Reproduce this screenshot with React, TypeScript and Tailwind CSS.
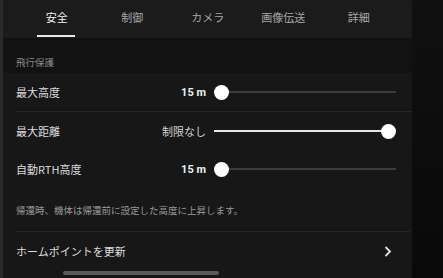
import React from "react";

const tabs = ["安全", "制御", "カメラ", "画像伝送", "詳細"];

function Slider({ value }: { value: number }) {
  // value: 0..1, knob travels inside the track
  return (
    <div className="relative w-[182px] h-[15px] flex items-center">
      <div className="absolute left-0 right-0 h-[2px] bg-[#3c3c3c]" />
      <div
        className="absolute left-0 h-[2px] bg-[#e8e8e8]"
        style={{ width: `${7 + value * 167}px` }}
      />
      <div
        className="absolute w-[15px] h-[15px] rounded-full bg-white"
        style={{ left: `${value * 167}px` }}
      />
    </div>
  );
}

function SliderRow({
  label,
  value,
  pos,
  bold,
}: {
  label: string;
  value: string;
  pos: number;
  bold?: boolean;
}) {
  return (
    <div className="flex items-center h-[38px] pl-[13px] pr-[16px]">
      <div className="flex-1 text-[11px] text-[#dcdcdc]">{label}</div>
      <div
        className={
          bold
            ? "text-[11px] font-bold text-[#eeeeee] font-['Roboto','Noto_Sans_CJK_JP',sans-serif]"
            : "text-[11px] text-[#d0d0d0]"
        }
      >
        {value}
      </div>
      <div className="ml-[8px]">
        <Slider value={pos} />
      </div>
    </div>
  );
}

export default function App() {
  return (
    <div className="w-[443px] h-[278px] flex bg-[#0c0c0c] overflow-hidden font-['Noto_Sans_CJK_JP',sans-serif] leading-none">
      <div className="w-[3px] bg-[#2a2a2a]" />
      <div className="w-[409px] flex flex-col bg-[#161616]">
        {/* tabs */}
        <div className="h-[38px] bg-[#1b1b1b] flex pl-[16px]">
          {tabs.map((t, i) => (
            <div
              key={t}
              className="w-[75.5px] relative flex items-center justify-center pb-[4px]"
            >
              <span
                className={
                  i === 0
                    ? "text-[11px] text-[#f2f2f2]"
                    : "text-[11px] text-[#a6a6a6]"
                }
              >
                {t}
              </span>
              {i === 0 && (
                <div className="absolute bottom-[1px] left-[18px] w-[38px] h-[2px] bg-[#e6e6e6]" />
              )}
            </div>
          ))}
        </div>

        {/* section header */}
        <div className="h-[35px] bg-[#121212] flex items-end pl-[13px] pb-[6px]">
          <span className="text-[9.5px] text-[#8a8a8a]">飛行保護</span>
        </div>

        {/* rows */}
        <div className="flex-1 bg-[#171717] flex flex-col">
          <SliderRow label="最大高度" value="15 m" pos={0} bold />
          <div className="ml-[13px] h-px bg-[#262626]" />
          <SliderRow label="最大距離" value="制限なし" pos={1} />
          <SliderRow label="自動RTH高度" value="15 m" pos={0} bold />

          <div className="h-[43px] flex items-center pl-[13px] pt-[3px]">
            <span className="text-[9.5px] text-[#9a9a9a]">
              帰還時、機体は帰還前に設定した高度に上昇します。
            </span>
          </div>
          <div className="ml-[13px] mr-[2px] h-px bg-[#262626]" />

          <div className="h-[39px] flex items-center pl-[13px] pr-[20px]">
            <span className="flex-1 text-[11px] text-[#dcdcdc]">
              ホームポイントを更新
            </span>
            <svg width="8" height="11" viewBox="0 0 8 11">
              <polyline
                points="1.5,1 6,5.5 1.5,10"
                fill="none"
                stroke="#e0e0e0"
                strokeWidth="1.8"
              />
            </svg>
          </div>
          <div className="relative flex-1">
            <div className="absolute left-[60px] top-0 w-[156px] h-[4px] rounded-full bg-[#5a5a5a]" />
          </div>
        </div>
      </div>
      <div className="flex-1 bg-gradient-to-b from-[#101010] to-[#090909]" />
    </div>
  );
}
